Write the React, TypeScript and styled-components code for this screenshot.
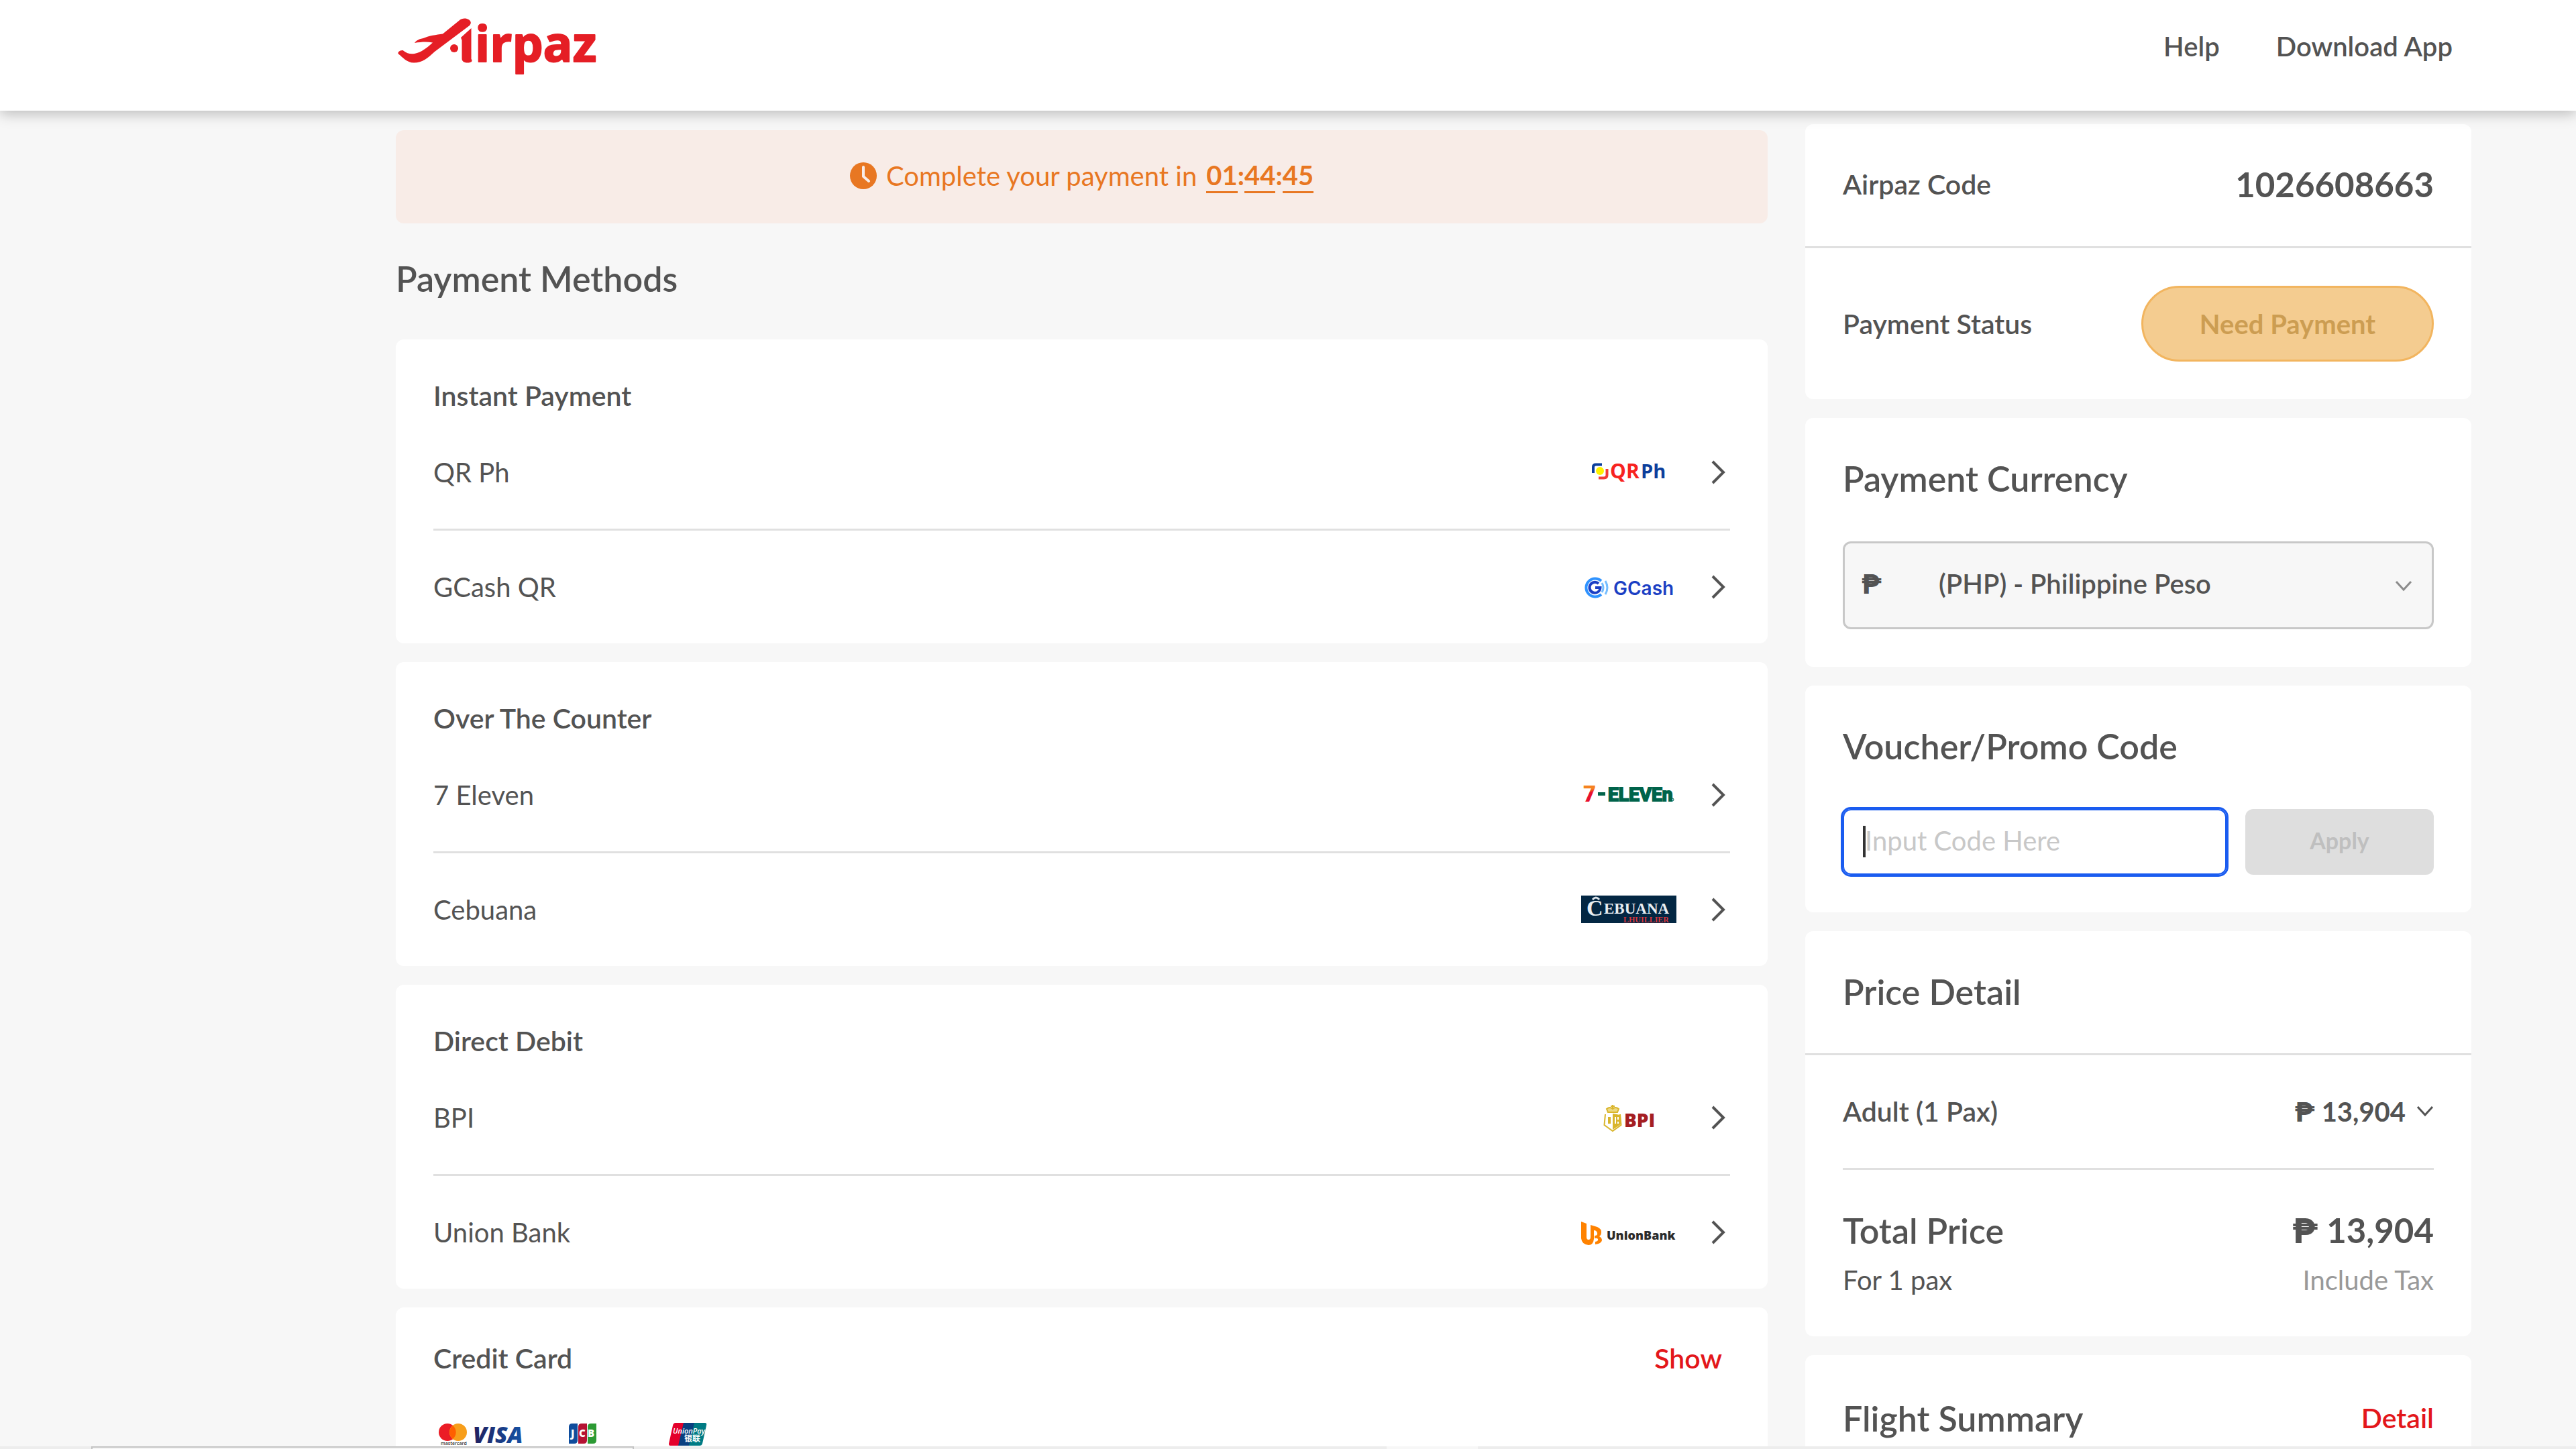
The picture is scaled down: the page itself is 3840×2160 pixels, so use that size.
import React, { useState } from "react";
import styled, { createGlobalStyle, css } from "styled-components";

const ink = "#535353";
const line = "#e0e0e0";
const red = "#e3171b";
const brand = "#e51e25";

const GlobalStyle = createGlobalStyle`
  *, *::before, *::after { box-sizing: border-box; }
  body {
    margin: 0;
    background: #f7f7f7;
    color: ${ink};
    font-family: Lato, "Liberation Sans", sans-serif;
    font-size: 40px;
    line-height: 56px;
  }
  h1, h2, h3, p { margin: 0; }
  button, input, select { font: inherit; color: inherit; }
  svg { overflow: visible; }
`;

const Page = styled.div`
  height: 100vh;
  overflow: hidden;
`;

const Header = styled.header`
  position: relative;
  z-index: 1;
  display: flex;
  align-items: center;
  justify-content: space-between;
  height: 165px;
  padding: 0 184px 28px 590px;
  background: #fff;
  box-shadow: 0 4px 20px rgba(0, 0, 0, 0.26);
`;

const Nav = styled.nav`
  display: flex;
  gap: 84px;
`;

const NavLink = styled.a`
  color: ${ink};
  font-weight: 600;
  text-decoration: none;
`;

const Main = styled.main`
  display: grid;
  grid-template-columns: minmax(0, 1fr) 993px;
  align-items: start;
  gap: 56px;
  padding: 20px 156px 0 590px;
`;

const Methods = styled.section`
  display: flex;
  flex-direction: column;
  padding-top: 9px;
`;

const Notice = styled.div`
  display: flex;
  align-items: center;
  justify-content: center;
  gap: 14px;
  height: 139px;
  padding-bottom: 3px;
  border-radius: 12px;
  background: #f8ece7;
  color: #e87722;
`;

const Timer = styled.strong`
  display: flex;
  font-weight: 700;
`;

const TimerPart = styled.span`
  border-bottom: 3px solid #e87722;
  line-height: 48px;
`;

const TimerColon = styled.span`
  line-height: 48px;
`;

const Title = styled.h2`
  font-size: 52px;
  line-height: 68px;
  font-weight: 600;
`;

const Figure = styled.span`
  font-size: 51px;
  line-height: 68px;
  font-weight: 700;
`;

const PageTitle = styled(Title)`
  margin: 48px 0 57px;
`;

const CardStack = styled.div`
  display: flex;
  flex-direction: column;
  gap: 28px;
`;

const Card = styled.section`
  border-radius: 12px;
  background: #fff;
`;

const MethodCard = styled(Card)`
  padding: 56px 56px 0;
`;

const CreditCard = styled(Card)`
  padding: 48px 56px 0;
`;

const GroupTitle = styled.h3`
  font-size: 41px;
  line-height: 56px;
  font-weight: 600;
`;

const MethodList = styled.ul`
  margin: 0;
  padding: 2px 0 0;
  list-style: none;
`;

const MethodItem = styled.li`
  & + & {
    border-top: 3px solid ${line};
  }
`;

const MethodButton = styled.button`
  display: flex;
  align-items: center;
  width: 100%;
  height: 168px;
  padding: 0 8px 0 0;
  border: 0;
  background: none;
  text-align: left;
`;

const MethodName = styled.span`
  flex: 1;
`;

const LogoSlot = styled.svg`
  width: 142px;
  height: 42px;
  margin-right: 52px;
`;

const CardHead = styled.div`
  display: flex;
  align-items: center;
  justify-content: space-between;
`;

const LinkButton = styled.button<{ $inset?: number }>`
  padding: 0;
  margin-right: ${(p) => p.$inset ?? 0}px;
  border: 0;
  background: none;
  color: ${red};
  font-size: 41px;
  font-weight: 600;
`;

const CardBrands = styled.div`
  display: grid;
  grid-template-columns: 194px 149px auto;
  justify-content: start;
  height: 140px;
  padding: 68px 8px 0;
`;

const Side = styled.aside`
  display: flex;
  flex-direction: column;
  gap: 28px;
`;

const Section = styled.div<{ $divided?: boolean }>`
  padding: 56px;
  ${(p) =>
    p.$divided &&
    css`
      padding-bottom: 58px;
      border-bottom: 3px solid ${line};
    `}
`;

const SummarySection = styled(Section)`
  padding-top: 60px;
`;

const SplitRow = styled.div`
  display: flex;
  align-items: center;
  justify-content: space-between;
`;

const Label = styled.span`
  font-size: 41px;
  font-weight: 600;
`;

const Status = styled.span`
  display: flex;
  align-items: center;
  justify-content: center;
  width: 436px;
  height: 113px;
  border: 3px solid #f2b55f;
  border-radius: 57px;
  background: #f4cc90;
  color: #cc9d52;
  font-weight: 700;
`;

const FieldTitle = styled(Title)`
  display: block;
  margin-bottom: 60px;
`;

const SelectBox = styled.div`
  position: relative;
`;

const Select = styled.select`
  width: 100%;
  height: 131px;
  padding: 0 84px 6px 140px;
  border: 3px solid #c8c8c8;
  border-radius: 12px;
  background: #f7f7f7;
  font-weight: 600;
  appearance: none;
`;

const Symbol = styled.span`
  font-family: Roboto, Lato, sans-serif;
  font-weight: 900;
  line-height: 1;
`;

const SelectSymbol = styled(Symbol)`
  position: absolute;
  top: 45px;
  left: 28px;
  pointer-events: none;
`;

const SelectArrow = styled.span`
  position: absolute;
  top: 58px;
  right: 32px;
  display: flex;
  pointer-events: none;
`;

const VoucherForm = styled.form`
  display: grid;
  grid-template-columns: minmax(0, 1fr) 281px;
  gap: 28px;
  height: 98px;
`;

const InputBox = styled.div`
  position: relative;
`;

const Input = styled.input`
  width: 100%;
  height: 98px;
  padding: 0 32px 4px 31px;
  border: 2px solid #1a5cf0;
  border-radius: 12px;
  outline: 3px solid #1a5cf0;
  background: #fff;
  caret-color: transparent;
  &::placeholder {
    color: #c8c8c8;
    opacity: 1;
  }
`;

const Caret = styled.span`
  position: absolute;
  top: 25px;
  left: 30px;
  width: 4px;
  height: 47px;
  background: #333;
`;

const Apply = styled.button`
  padding: 0 0 4px;
  border: 0;
  border-radius: 12px;
  background: #dedede;
  color: #bfbfbf;
  font-size: 34px;
  font-weight: 700;
`;

const Price = styled.span`
  display: flex;
  align-items: center;
  gap: 16px;
  font-weight: 700;
`;

const Fare = styled(SplitRow)`
  padding-bottom: 56px;
  border-bottom: 3px solid ${line};
`;

const Total = styled.div`
  display: flex;
  flex-direction: column;
  gap: 12px;
  padding-top: 56px;
`;

const Muted = styled.span`
  color: #999;
`;

const BrowserEdge = styled.div`
  position: fixed;
  z-index: 2;
  right: 0;
  bottom: 0;
  left: 0;
  display: flex;
  height: 4px;
  padding-left: 136px;
  background: #ededed;
`;

const StatusBubble = styled.div`
  width: 809px;
  height: 4px;
  border: 2px solid #c4c4c4;
  border-bottom: 0;
  background: #f5f5f5;
`;

const ActiveTab = styled.div`
  width: 136px;
  height: 4px;
  margin-left: 1122px;
  background: #f7f7f7;
`;

const AirpazLogo = () => (
  <svg width="304" height="88" viewBox="0 0 304 88" role="img" aria-label="Airpaz">
    <g fill={brand}>
      <path d="M70 25.5 94 6C98 2.500 102 2 106 3C111 4.500 114 8.500 110 13L58 52C48 61 40 68.500 27 68.500C16 68.500 10 60 4 55.500C2 53 6 49.500 10.500 50C17 55 22 56 28 55C38 53 47 46 55 38.500C46 37 38 37.500 28 39C31 35 35 33 41 32C50 28 60 27 70 25.500Z" />
      <path d="M97 31 112.500 17V63C115 66 113 68.500 107 68.500C101 68.500 98.500 66 98.500 62V35Z" />
      <ellipse cx="87" cy="47" rx="6" ry="6" />
      <text x="118" y="67" fontFamily="Open Sans" fontWeight="700" fontSize="73" stroke={brand} strokeWidth="2" strokeLinejoin="round">irpaz</text>
    </g>
  </svg>
);

const ClockIcon = () => (
  <svg width="40" height="40" viewBox="0 0 40 40" aria-hidden="true">
    <circle cx="20" cy="20" r="20" fill="#e87722" />
    <path d="M20 7V21L28 28" fill="none" stroke="#f8ece7" strokeWidth="4" strokeLinecap="round" strokeLinejoin="round" />
  </svg>
);

const ChevronRight = () => (
  <svg width="20" height="36" viewBox="0 0 20 36" aria-hidden="true">
    <path d="M2 2 18 18 2 34" fill="none" stroke={ink} strokeWidth="4" />
  </svg>
);

const ChevronDown = ({ color = ink }: { color?: string }) => (
  <svg width="26" height="18" viewBox="0 0 26 18" aria-hidden="true">
    <path d="M2 2 13 14 24 2" fill="none" stroke={color} strokeWidth="3" />
  </svg>
);

const QrPhLogo = () => (
  <LogoSlot viewBox="0 0 142 42" aria-hidden="true">
    <path d="M18 22V13Q18 9.500 22 9.500H31" fill="none" stroke="#0c3f9c" strokeWidth="4" />
    <path d="M38.500 16V25Q38.500 29.500 34 29.500H26" fill="none" stroke="#f23a36" strokeWidth="4" />
    <circle cx="28" cy="19" r="6" fill="#fff200" />
    <text x="43" y="30" fontFamily="Open Sans" fontWeight="700" fontSize="30" fill="#f7231f">QR</text>
    <text x="89" y="30" fontFamily="Open Sans" fontWeight="700" fontSize="29" fill="#0c3f9c">Ph</text>
  </LogoSlot>
);

const GCashLogo = () => (
  <LogoSlot viewBox="0 0 142 42" aria-hidden="true">
    <g fill="none">
      <path d="M30 12A13.500 13.500 0 1 0 30 32" stroke="#2f93ff" strokeWidth="4" />
      <path d="M26 16A8 8 0 1 0 28.500 22H21" stroke="#1b3fc4" strokeWidth="4" />
      <path d="M31 15Q35 22 31 29" stroke="#74bdff" strokeWidth="3" />
      <path d="M36 12Q42 22 36 32" stroke="#74bdff" strokeWidth="3" />
    </g>
    <text x="48" y="33" fontFamily="Inter" fontWeight="600" fontSize="28" fill="#1b3fc4">GCash</text>
  </LogoSlot>
);

const SevenElevenLogo = () => (
  <LogoSlot viewBox="0 0 142 42" aria-hidden="true">
    <defs>
      <linearGradient id="seven" x1="0" y1="0" x2="0" y2="1">
        <stop offset="0.300" stopColor="#f58220" />
        <stop offset="0.450" stopColor="#e8112d" />
      </linearGradient>
    </defs>
    <text x="3" y="31" fontFamily="Roboto" fontWeight="900" fontSize="33" fill="url(#seven)">7</text>
    <path d="M25 17H36V22H25Z" fill="#00634a" />
    <text x="40" y="30" fontFamily="Roboto" fontWeight="700" fontSize="28" fill="#00634a" stroke="#00634a" strokeWidth="2">ELEVEn</text>
    <circle cx="136" cy="28" r="2" fill="none" stroke="#00634a" />
  </LogoSlot>
);

const CebuanaLogo = () => (
  <LogoSlot viewBox="0 0 142 42" aria-hidden="true">
    <path d="M0 0H142V41H0Z" fill="#032743" />
    <path d="M17 6Q22 0 27 6" fill="none" stroke="#dfe6ec" strokeWidth="3" />
    <text x="8" y="30" fontFamily="Liberation Serif" fontWeight="700" fontSize="34" fill="#e8eef2">C</text>
    <text x="34" y="27" fontFamily="Liberation Serif" fontWeight="700" fontSize="23" fill="#e8eef2">EBUANA</text>
    <text x="63" y="40" fontFamily="Liberation Serif" fontWeight="700" fontSize="12" fill="#d8343a">LHUILLIER</text>
  </LogoSlot>
);

const BpiLogo = () => (
  <LogoSlot viewBox="0 0 142 42" aria-hidden="true">
    <g fill="none" stroke="#d9b52c" strokeWidth="2">
      <path d="M36 16 34.500 32 47 41 59.500 32 58 16" />
      <path d="M40 13H54L56 8Q51 4 47 8Q43 4 38 8Z" fill="#ecd983" />
      <path d="M47 2V8M44 4H50" />
      <path d="M42 20V30" strokeWidth="4" />
    </g>
    <path d="M47 15 58 17 59 31 47 39Z" fill="#d9b52c" />
    <path d="M51 20V30M55 20V24M55 27V30" stroke="#fff" strokeWidth="2" />
    <text x="64" y="35" fontFamily="Open Sans" fontWeight="800" fontSize="28" fill="#a51e22">BPI</text>
  </LogoSlot>
);

const UnionBankLogo = () => (
  <LogoSlot viewBox="0 0 142 42" aria-hidden="true">
    <path d="M0 5 8 8V28Q8 32 11 32Q14 32 14 28V10L24 13Q31 16 30 22Q30 25 27 27Q31 29 31 33Q30 38 21 39V35Q26 34 25 31Q24 29 20 30V26Q25 26 24 22Q23 18 19 18V31Q18 40 11 40Q1 39 0 30Z" fill="#ff8200" />
    <text x="38" y="32" fontFamily="Open Sans" fontWeight="800" fontSize="18" fill="#2b2b2b">UnionBank</text>
  </LogoSlot>
);

const MastercardVisa = () => (
  <svg width="130" height="36" viewBox="0 0 130 36" aria-label="Mastercard and Visa" role="img">
    <defs>
      <linearGradient id="visa" x1="0" y1="0" x2="1" y2="0">
        <stop offset="0" stopColor="#20205f" />
        <stop offset="1" stopColor="#1552a5" />
      </linearGradient>
    </defs>
    <circle cx="13" cy="14" r="13" fill="#eb1c26" />
    <circle cx="29" cy="14" r="13" fill="#f79e1b" />
    <path d="M21 4A13 13 0 0 1 21 24A13 13 0 0 1 21 4Z" fill="#ff5f00" />
    <text x="3" y="33" fontFamily="Open Sans" fontWeight="600" fontSize="7" fill="#333">mastercard</text>
    <text x="51" y="30" fontFamily="Open Sans" fontWeight="800" fontStyle="italic" fontSize="34" fill="url(#visa)">VISA</text>
  </svg>
);

const Jcb = () => (
  <svg width="42" height="36" viewBox="0 0 42 36" aria-label="JCB" role="img">
    <path d="M5 1H13V26Q13 31 8 31H0V6Q0 1 5 1Z" fill="#0f4c9c" />
    <path d="M19 1H27V26Q27 31 22 31H14V6Q14 1 19 1Z" fill="#b51233" />
    <path d="M33 1H41V26Q41 31 36 31H28V6Q28 1 33 1Z" fill="#2c9a34" />
    <text x="3" y="21" fontFamily="Open Sans" fontWeight="800" fontSize="15" fill="#fff">J</text>
    <text x="15" y="21" fontFamily="Open Sans" fontWeight="800" fontSize="15" fill="#fff">C</text>
    <text x="28" y="21" fontFamily="Open Sans" fontWeight="800" fontSize="15" fill="#fff">B</text>
  </svg>
);

const UnionPay = () => (
  <svg width="58" height="36" viewBox="0 0 58 36" aria-label="UnionPay" role="img">
    <path d="M10 0H24L16 34H2Q0 34 0 31L6 4Q7 0 10 0Z" fill="#e4002b" />
    <path d="M22 0H40L32 34H14Z" fill="#0a3f80" />
    <path d="M38 0H54Q57 0 56 4L50 31Q49 34 46 34H30Z" fill="#007b84" />
    <text x="6" y="16" fontFamily="Open Sans" fontWeight="600" fontStyle="italic" fontSize="11" fill="#fff">UnionPay</text>
    <text x="23" y="28" fontFamily="Noto Sans CJK SC" fontWeight="700" fontSize="12" fill="#fff">银联</text>
  </svg>
);

const groups = [
  {
    title: "Instant Payment",
    methods: [
      { name: "QR Ph", Logo: QrPhLogo },
      { name: "GCash QR", Logo: GCashLogo },
    ],
  },
  {
    title: "Over The Counter",
    methods: [
      { name: "7 Eleven", Logo: SevenElevenLogo },
      { name: "Cebuana", Logo: CebuanaLogo },
    ],
  },
  {
    title: "Direct Debit",
    methods: [
      { name: "BPI", Logo: BpiLogo },
      { name: "Union Bank", Logo: UnionBankLogo },
    ],
  },
];

export default function App() {
  const [code, setCode] = useState("");

  return (
    <>
      <GlobalStyle />
      <Page>
        <Header>
          <AirpazLogo />
          <Nav>
            <NavLink href="#help">Help</NavLink>
            <NavLink href="#app">Download App</NavLink>
          </Nav>
        </Header>
        <Main>
          <Methods>
            <Notice>
              <ClockIcon />
              <span>Complete your payment in</span>
              <Timer>
                <TimerPart>01</TimerPart>
                <TimerColon>:</TimerColon>
                <TimerPart>44</TimerPart>
                <TimerColon>:</TimerColon>
                <TimerPart>45</TimerPart>
              </Timer>
            </Notice>
            <PageTitle as="h1">Payment Methods</PageTitle>
            <CardStack>
              {groups.map(({ title, methods }) => (
                <MethodCard key={title}>
                  <GroupTitle>{title}</GroupTitle>
                  <MethodList>
                    {methods.map(({ name, Logo }) => (
                      <MethodItem key={name}>
                        <MethodButton type="button">
                          <MethodName>{name}</MethodName>
                          <Logo />
                          <ChevronRight />
                        </MethodButton>
                      </MethodItem>
                    ))}
                  </MethodList>
                </MethodCard>
              ))}
              <CreditCard>
                <CardHead>
                  <GroupTitle>Credit Card</GroupTitle>
                  <LinkButton type="button" $inset={12}>Show</LinkButton>
                </CardHead>
                <CardBrands>
                  <MastercardVisa />
                  <Jcb />
                  <UnionPay />
                </CardBrands>
              </CreditCard>
            </CardStack>
          </Methods>
          <Side>
            <Card>
              <Section $divided>
                <SplitRow>
                  <Label>Airpaz Code</Label>
                  <Figure>1026608663</Figure>
                </SplitRow>
              </Section>
              <Section>
                <SplitRow>
                  <Label>Payment Status</Label>
                  <Status>Need Payment</Status>
                </SplitRow>
              </Section>
            </Card>
            <Card>
              <Section>
                <FieldTitle as="label" htmlFor="currency">Payment Currency</FieldTitle>
                <SelectBox>
                  <Select id="currency" defaultValue="PHP">
                    <option value="PHP">(PHP) - Philippine Peso</option>
                  </Select>
                  <SelectSymbol>₱</SelectSymbol>
                  <SelectArrow>
                    <ChevronDown color="#8c8c8c" />
                  </SelectArrow>
                </SelectBox>
              </Section>
            </Card>
            <Card>
              <Section>
                <FieldTitle as="label" htmlFor="voucher">Voucher/Promo Code</FieldTitle>
                <VoucherForm onSubmit={(e) => e.preventDefault()}>
                  <InputBox>
                    <Input
                      id="voucher"
                      placeholder="Input Code Here"
                      value={code}
                      onChange={(e) => setCode(e.target.value)}
                    />
                    {code === "" && <Caret />}
                  </InputBox>
                  <Apply type="submit" disabled={code === ""}>Apply</Apply>
                </VoucherForm>
              </Section>
            </Card>
            <Card>
              <Section $divided>
                <Title>Price Detail</Title>
              </Section>
              <Section>
                <Fare>
                  <Label>Adult (1 Pax)</Label>
                  <Price>
                    <span><Symbol>₱</Symbol> 13,904</span>
                    <ChevronDown />
                  </Price>
                </Fare>
                <Total>
                  <SplitRow>
                    <Title as="span">Total Price</Title>
                    <Figure><Symbol>₱</Symbol> 13,904</Figure>
                  </SplitRow>
                  <SplitRow>
                    <span>For 1 pax</span>
                    <Muted>Include Tax</Muted>
                  </SplitRow>
                </Total>
              </Section>
            </Card>
            <Card>
              <SummarySection>
                <SplitRow>
                  <Title>Flight Summary</Title>
                  <LinkButton type="button">Detail</LinkButton>
                </SplitRow>
              </SummarySection>
            </Card>
          </Side>
        </Main>
        <BrowserEdge>
          <StatusBubble />
          <ActiveTab />
        </BrowserEdge>
      </Page>
    </>
  );
}
